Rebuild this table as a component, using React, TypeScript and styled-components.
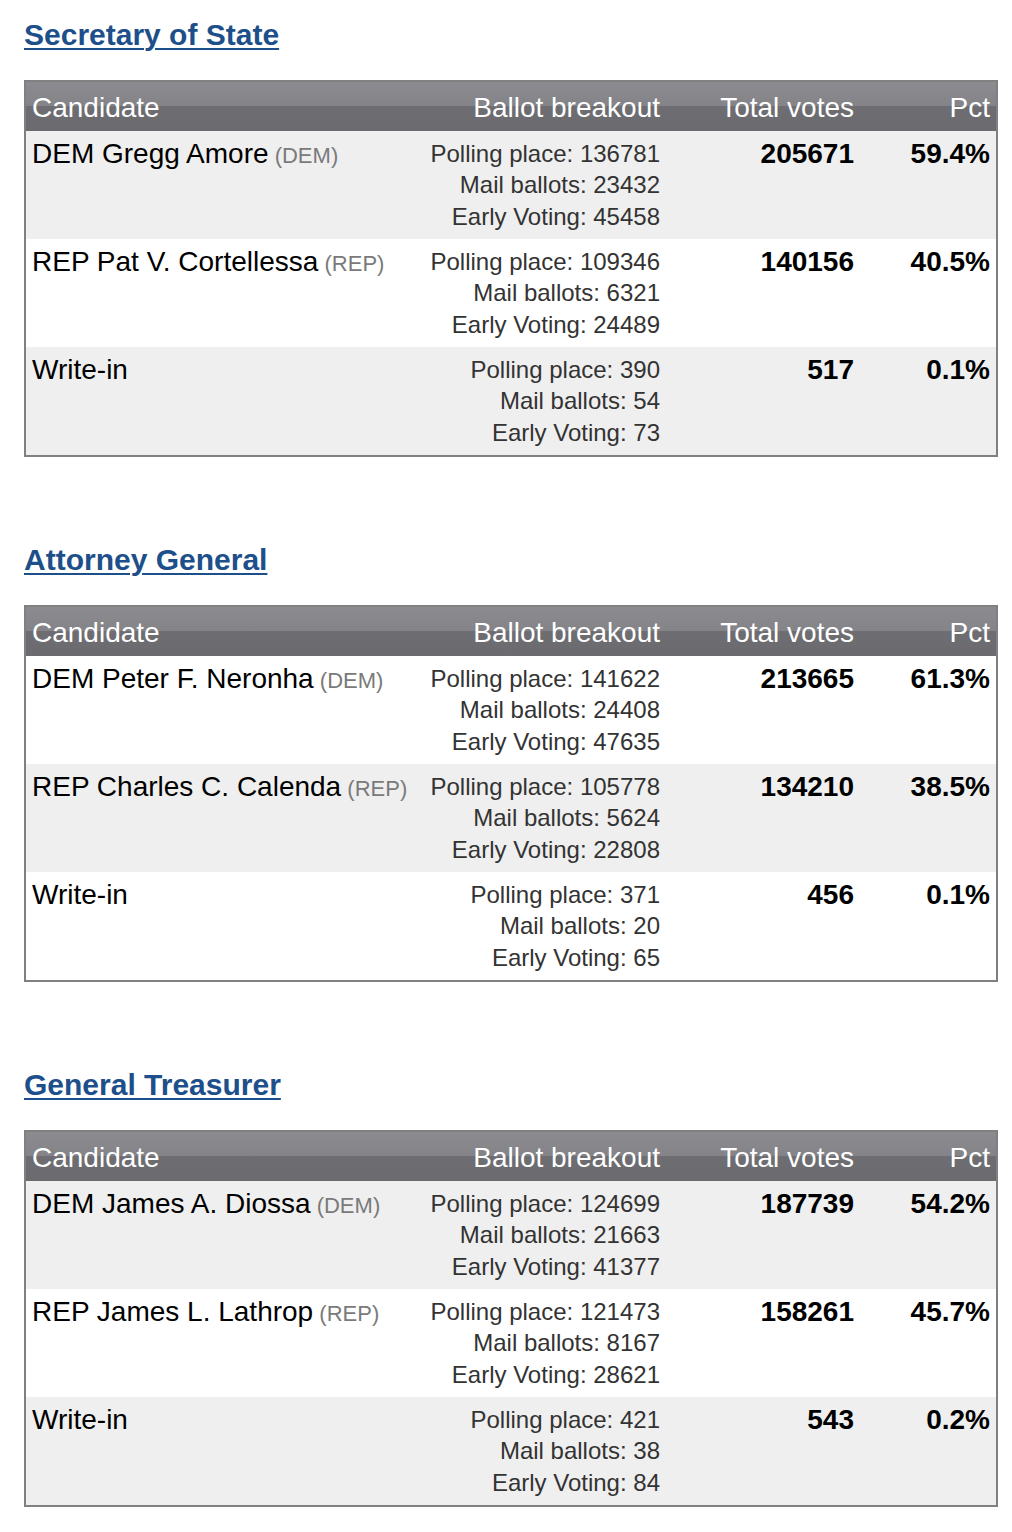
import React from "react";
import styled, { createGlobalStyle } from "styled-components";

const GlobalStyle = createGlobalStyle`
  html, body { margin: 0; padding: 0; background: #ffffff; }
  body { font-family: "Liberation Sans", Arial, Helvetica, sans-serif; }
`;

const Page = styled.div`
  padding: 17px 14px 24px 24px;
  display: flex;
  flex-direction: column;
`;

const Section = styled.section`
  display: flex;
  flex-direction: column;
  margin-bottom: 85px;
  &:last-child { margin-bottom: 0; }
`;

const Title = styled.a`
  align-self: flex-start;
  font-size: 30px;
  line-height: 36px;
  font-weight: bold;
  color: #1d4f8a;
  text-decoration: underline;
  text-decoration-thickness: 2px;
  text-underline-offset: 3px;
  margin-bottom: 27px;
  cursor: pointer;
`;

const Table = styled.div`
  border: 2px solid #808080;
  display: flex;
  flex-direction: column;
`;

const COLS = "394px 246px 194px 136px";

const HeaderRow = styled.div`
  display: grid;
  grid-template-columns: ${COLS};
  background: linear-gradient(#8b8b90 0%, #838388 49%, #6e6e72 50%, #6b6b6f 100%);
  color: #ffffff;
  font-size: 28px;
  line-height: 31.5px;
  padding: 10px 0 7.5px;
`;

const HeadCell = styled.div<{ $align?: "left" | "right" }>`
  padding: 0 6px;
  text-align: ${(p) => p.$align ?? "left"};
  white-space: nowrap;
`;

const Row = styled.div<{ $shaded: boolean }>`
  display: grid;
  grid-template-columns: ${COLS};
  background: ${(p) => (p.$shaded ? "#efefef" : "#ffffff")};
  padding: 6.5px 0 7px;
  line-height: 31.5px;
`;

const NameCell = styled.div`
  padding: 0 6px;
  font-size: 28px;
  color: #000000;
  white-space: nowrap;
`;

const Party = styled.span`
  font-size: 22px;
  color: #7a7a7a;
`;

const BreakoutCell = styled.div`
  padding: 0 6px;
  font-size: 24px;
  color: #333333;
  text-align: right;
  display: flex;
  flex-direction: column;
  white-space: nowrap;
`;

const NumCell = styled.div`
  padding: 0 6px;
  font-size: 28px;
  font-weight: bold;
  color: #000000;
  text-align: right;
`;

type Cand = {
  name: string;
  party?: string;
  polling: number;
  mail: number;
  early: number;
  total: number;
  pct: string;
};

type Race = { title: string; shadeFirst: boolean; candidates: Cand[] };

const races: Race[] = [
  {
    title: "Secretary of State",
    shadeFirst: true,
    candidates: [
      { name: "DEM Gregg Amore", party: "DEM", polling: 136781, mail: 23432, early: 45458, total: 205671, pct: "59.4%" },
      { name: "REP Pat V. Cortellessa", party: "REP", polling: 109346, mail: 6321, early: 24489, total: 140156, pct: "40.5%" },
      { name: "Write-in", polling: 390, mail: 54, early: 73, total: 517, pct: "0.1%" },
    ],
  },
  {
    title: "Attorney General",
    shadeFirst: false,
    candidates: [
      { name: "DEM Peter F. Neronha", party: "DEM", polling: 141622, mail: 24408, early: 47635, total: 213665, pct: "61.3%" },
      { name: "REP Charles C. Calenda", party: "REP", polling: 105778, mail: 5624, early: 22808, total: 134210, pct: "38.5%" },
      { name: "Write-in", polling: 371, mail: 20, early: 65, total: 456, pct: "0.1%" },
    ],
  },
  {
    title: "General Treasurer",
    shadeFirst: true,
    candidates: [
      { name: "DEM James A. Diossa", party: "DEM", polling: 124699, mail: 21663, early: 41377, total: 187739, pct: "54.2%" },
      { name: "REP James L. Lathrop", party: "REP", polling: 121473, mail: 8167, early: 28621, total: 158261, pct: "45.7%" },
      { name: "Write-in", polling: 421, mail: 38, early: 84, total: 543, pct: "0.2%" },
    ],
  },
];

function RaceTable({ race }: { race: Race }) {
  return (
    <Section>
      <Title>{race.title}</Title>
      <Table>
        <HeaderRow>
          <HeadCell>Candidate</HeadCell>
          <HeadCell $align="right">Ballot breakout</HeadCell>
          <HeadCell $align="right">Total votes</HeadCell>
          <HeadCell $align="right">Pct</HeadCell>
        </HeaderRow>
        {race.candidates.map((c, i) => (
          <Row key={c.name} $shaded={(i % 2 === 0) === race.shadeFirst}>
            <NameCell>
              {c.name}
              {c.party && <Party> ({c.party})</Party>}
            </NameCell>
            <BreakoutCell>
              <span>Polling place: {c.polling}</span>
              <span>Mail ballots: {c.mail}</span>
              <span>Early Voting: {c.early}</span>
            </BreakoutCell>
            <NumCell>{c.total}</NumCell>
            <NumCell>{c.pct}</NumCell>
          </Row>
        ))}
      </Table>
    </Section>
  );
}

export default function App() {
  return (
    <>
      <GlobalStyle />
      <Page>
        {races.map((r) => (
          <RaceTable key={r.title} race={r} />
        ))}
      </Page>
    </>
  );
}
